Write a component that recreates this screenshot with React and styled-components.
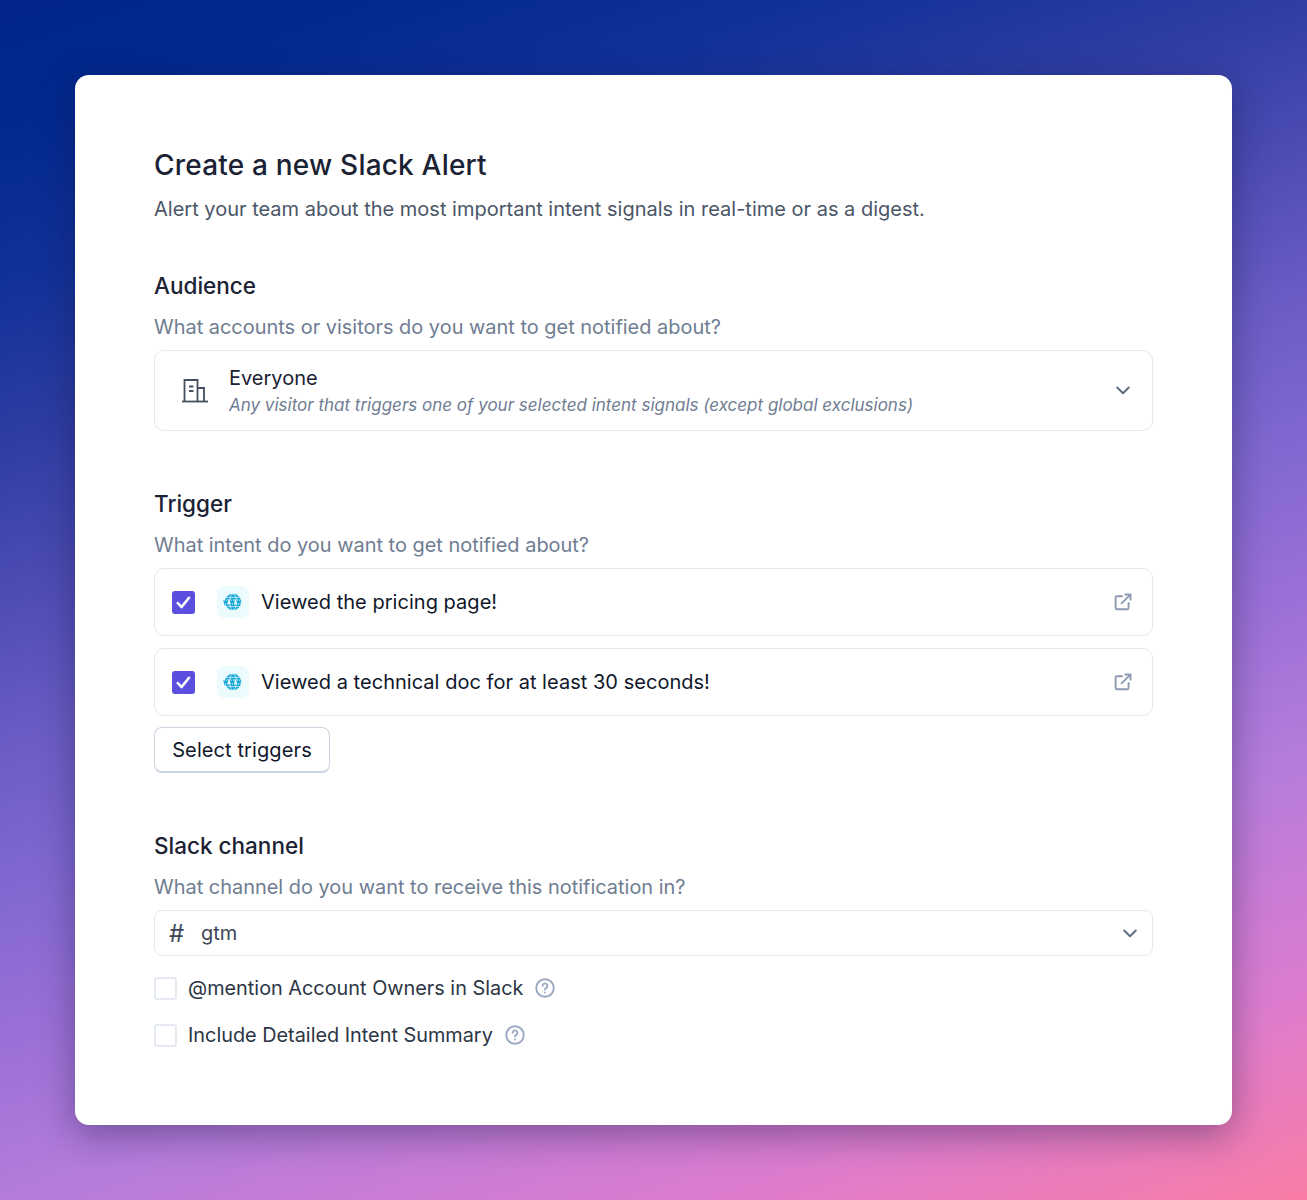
import React from 'react';
import styled, { createGlobalStyle } from 'styled-components';

const GlobalStyle = createGlobalStyle`
  html, body {
    margin: 0;
    padding: 0;
  }
  body {
    font-family: Inter, "Liberation Sans", sans-serif;
  }
`;

const Page = styled.div`
  box-sizing: border-box;
  width: 1307px;
  height: 1200px;
  padding: 75px;
  background: linear-gradient(161deg, #01258a 0%, #02298f 8%, #12329a 18%, #2f3da3 27%, #4c4cb4 36%, #6a5cc4 45%, #8168d0 54%, #9a70d6 63%, #b57cdc 73%, #de7ccd 88%, #f97ca5 100%);
`;

const Card = styled.main`
  box-sizing: border-box;
  height: 1050px;
  padding: 74px 79px 0;
  background: #fff;
  border-radius: 14px;
  box-shadow: 0 10px 36px rgba(20, 20, 60, 0.4);
`;

const Title = styled.h1`
  margin: 0;
  font-size: 28px;
  line-height: 32px;
  font-weight: 500;
  letter-spacing: 0.2px;
  color: #1a2233;
`;

const Subtitle = styled.p`
  margin: 14px 0 0;
  font-size: 20px;
  line-height: 28px;
  color: #4b5668;
`;

const Section = styled.section`
  margin-top: ${(p) => p.$top}px;
`;

const SectionTitle = styled.h2`
  margin: 0;
  font-size: 22.5px;
  line-height: 30px;
  font-weight: 500;
  color: #1a2233;
`;

const Hint = styled.p`
  margin: 12px 0 9px;
  font-size: 19.95px;
  line-height: 28px;
  color: #6f7d92;
`;

const Box = styled.div`
  box-sizing: border-box;
  display: flex;
  align-items: center;
  border: 1.5px solid #e2e8f0;
  border-radius: 10px;
  background: #fff;
`;

const AudienceBox = styled(Box)`
  height: 81px;
  padding: 0 22px 0 26px;
`;

const AudienceText = styled.div`
  flex: 1;
  margin-left: 20px;
`;

const AudienceName = styled.div`
  font-size: 20px;
  line-height: 28px;
  color: #1a2233;
`;

const AudienceNote = styled.div`
  font-size: 17px;
  line-height: 26px;
  font-style: italic;
  color: #6f7d92;
`;

const TriggerList = styled.div`
  display: flex;
  flex-direction: column;
  gap: 12px;
`;

const TriggerRow = styled(Box)`
  height: 68px;
  padding: 0 20px 0 17px;
`;

const CheckMark = styled.span`
  box-sizing: border-box;
  width: 23px;
  height: 23px;
  display: flex;
  align-items: center;
  justify-content: center;
  border-radius: 3px;
  background: #5b4fe0;
  flex: none;
`;

const GlobeTile = styled.span`
  width: 32px;
  height: 32px;
  margin-left: 22px;
  display: flex;
  align-items: center;
  justify-content: center;
  border-radius: 8px;
  background: #ecfbfe;
  flex: none;
`;

const TriggerLabel = styled.span`
  flex: 1;
  margin-left: 12px;
  font-size: 20px;
  font-weight: 400;
  letter-spacing: 0.03px;
  color: #10172a;
`;

const SelectButton = styled.button`
  display: block;
  box-sizing: border-box;
  width: 176px;
  height: 46px;
  margin-top: 11px;
  padding: 0;
  font-family: inherit;
  font-size: 20px;
  font-weight: 400;
  letter-spacing: 0.1px;
  color: #10172a;
  background: #fff;
  border: 1.5px solid #cbd5e1;
  border-bottom-width: 2px;
  border-radius: 8px;
`;

const ChannelBox = styled(Box)`
  height: 46px;
  padding: 0 15px 0 14px;
  border-radius: 8px;
`;

const Hash = styled.span`
  width: 32px;
  font-size: 24px;
  color: #3c4657;
`;

const ChannelName = styled.span`
  flex: 1;
  font-size: 20px;
  color: #3c4657;
`;

const OptionList = styled.div`
  display: flex;
  flex-direction: column;
  gap: 23px;
  margin-top: 20px;
`;

const Option = styled.label`
  display: flex;
  align-items: center;
  height: 24px;
  font-size: 19.85px;
  color: #2b3545;
`;

const EmptyCheck = styled.span`
  box-sizing: border-box;
  width: 23px;
  height: 23px;
  margin-right: 11px;
  border: 2.5px solid #e4e9f2;
  border-radius: 3px;
  background: #fff;
`;

const HelpIcon = styled.svg`
  margin-left: 12px;
`;

const BuildingIcon = () => (
  <svg width="28" height="26" viewBox="0 0 28 26" fill="none" stroke="#454f61" strokeWidth="1.8">
    <path d="M1 23.5h26" />
    <path d="M3.5 23.5V2h13v21.5" />
    <path d="M16.5 10h6.5v13.5" />
    <path d="M8 8.5h4.5M8 13h4.5" />
  </svg>
);

const Chevron = () => (
  <svg width="14" height="9" viewBox="0 0 14 9" fill="none" stroke="#5d6b80" strokeWidth="1.9" strokeLinecap="round" strokeLinejoin="round">
    <path d="M1.2 1.5 7 7.2l5.8-5.7" />
  </svg>
);

const Check = () => (
  <svg width="15" height="13" viewBox="0 0 15 13" fill="none" stroke="#fff" strokeWidth="2.6" strokeLinecap="round" strokeLinejoin="round">
    <path d="M1.8 7.2 5.6 11 13 1.8" />
  </svg>
);

const Globe = () => (
  <svg width="20" height="20" viewBox="0 0 20 20" fill="none">
    <circle cx="10" cy="10" r="8.2" fill="#17a9d6" />
    <ellipse cx="10" cy="10" rx="3.4" ry="8.2" stroke="#ecfbfe" strokeWidth=".7" />
    <path d="M3 5.4h14M3 14.6h14" stroke="#ecfbfe" strokeWidth=".7" />
    <rect x="0" y="7.6" width="20" height="4.8" fill="#ecfbfe" />
    <path d="M.8 8.2l.9 3.6 1.1-3.6 1.1 3.6.9-3.6M7.3 8.2l.9 3.6 1.1-3.6 1.1 3.6.9-3.6M13.8 8.2l.9 3.6 1.1-3.6 1.1 3.6.9-3.6" stroke="#17a9d6" strokeWidth="1.2" />
  </svg>
);

const ExternalLink = () => (
  <svg width="18" height="18" viewBox="0 0 20 20" fill="none" stroke="#8d9bb0" strokeWidth="2.1" strokeLinecap="round" strokeLinejoin="round">
    <path d="M9 3.6H3.4a1.6 1.6 0 0 0-1.6 1.6v11.2a1.6 1.6 0 0 0 1.6 1.6h11.2a1.6 1.6 0 0 0 1.6-1.6V11" />
    <path d="M8.5 11.5 18.4 1.6M12.6 1.6h5.8v5.8" />
  </svg>
);

const Help = () => (
  <HelpIcon width="20" height="20" viewBox="0 0 20 20" fill="none" stroke="#9aa9c0" strokeWidth="1.9" strokeLinecap="round">
    <circle cx="10" cy="10" r="8.8" />
    <path d="M7.6 7.8a2.4 2.4 0 1 1 3.6 2.1c-.8.5-1.2.9-1.2 1.7" />
    <path d="M10 14.4v.1" />
  </HelpIcon>
);

const triggers = ['Viewed the pricing page!', 'Viewed a technical doc for at least 30 seconds!'];
const options = ['@mention Account Owners in Slack', 'Include Detailed Intent Summary'];

export default function App() {
  return (
    <Page>
      <GlobalStyle />
      <Card>
        <Title>Create a new Slack Alert</Title>
        <Subtitle>Alert your team about the most important intent signals in real-time or as a digest.</Subtitle>

        <Section $top={48}>
          <SectionTitle>Audience</SectionTitle>
          <Hint>What accounts or visitors do you want to get notified about?</Hint>
          <AudienceBox>
            <BuildingIcon />
            <AudienceText>
              <AudienceName>Everyone</AudienceName>
              <AudienceNote>Any visitor that triggers one of your selected intent signals (except global exclusions)</AudienceNote>
            </AudienceText>
            <Chevron />
          </AudienceBox>
        </Section>

        <Section $top={58}>
          <SectionTitle>Trigger</SectionTitle>
          <Hint>What intent do you want to get notified about?</Hint>
          <TriggerList>
            {triggers.map((t) => (
              <TriggerRow key={t}>
                <CheckMark><Check /></CheckMark>
                <GlobeTile><Globe /></GlobeTile>
                <TriggerLabel>{t}</TriggerLabel>
                <ExternalLink />
              </TriggerRow>
            ))}
          </TriggerList>
          <SelectButton>Select triggers</SelectButton>
        </Section>

        <Section $top={58}>
          <SectionTitle>Slack channel</SectionTitle>
          <Hint>What channel do you want to receive this notification in?</Hint>
          <ChannelBox>
            <Hash>#</Hash>
            <ChannelName>gtm</ChannelName>
            <Chevron />
          </ChannelBox>
          <OptionList>
            {options.map((o) => (
              <Option key={o}>
                <EmptyCheck />
                {o}
                <Help />
              </Option>
            ))}
          </OptionList>
        </Section>
      </Card>
    </Page>
  );
}
